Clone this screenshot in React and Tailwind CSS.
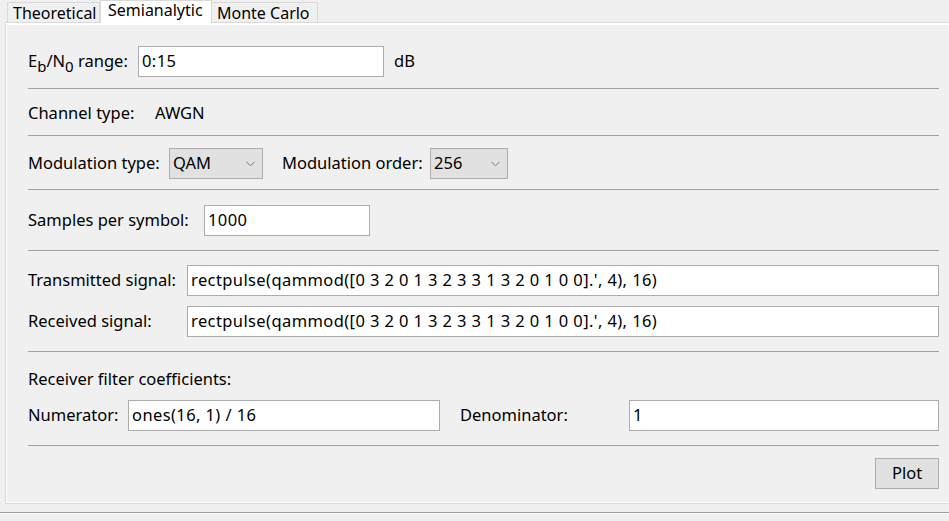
import React from "react";

const F = { fontFamily: '"Noto Sans", "Open Sans", sans-serif' };

function Input({ value, className }) {
  return (
    <div className={"h-[31px] bg-white border border-[#acacac] flex items-center pl-[3px] text-[16.5px] tracking-[0.4px] text-black whitespace-nowrap overflow-hidden " + className}>
      {value}
    </div>
  );
}

function Select({ value, className }) {
  return (
    <div className={"h-[31px] bg-[#e1e1e1] border border-[#adadad] flex items-center pl-[3px] pr-[7px] text-[16.5px] text-black justify-between " + className}>
      <span>{value}</span>
      <svg width="9" height="6" viewBox="0 0 9 6" className="mt-[1px]">
        <path d="M0.5 0.8 L4.5 4.8 L8.5 0.8" fill="none" stroke="#7a7a7a" strokeWidth="1" />
      </svg>
    </div>
  );
}

function Sep({ className }) {
  return <div className={"h-px bg-[#a0a0a0] mr-[10px] " + className} />;
}

export default function App() {
  return (
    <div style={F} className="w-[949px] h-[521px] bg-[#f0f0f0] overflow-hidden text-black text-[16.5px] flex flex-col">
      {/* tabs */}
      <div className="h-[22px] flex items-end pl-[7px] relative z-10 shrink-0 text-[16px]">
        <div className="h-[20px] w-[93px] border border-b-0 border-[#d9d9d9] bg-[#f0f0f0] pl-[5px] flex items-center leading-none">Theoretical</div>
        <div className="h-[23px] -mb-[1px] w-[112px] border border-b-0 border-[#d9d9d9] bg-white pl-[7px] flex items-start leading-[19px]">Semianalytic</div>
        <div className="h-[20px] w-[106px] border border-b-0 border-l-0 border-[#d9d9d9] bg-[#f0f0f0] pl-[5px] flex items-center leading-none">Monte Carlo</div>
      </div>
      {/* panel */}
      <div className="ml-[5px] h-[482px] shrink-0 border-t border-l border-b border-[#d9d9d9] bg-[#f0f0f0] flex flex-col">
        <div className="h-[2px] bg-white border-l border-white shrink-0" />
        <div className="flex-1 border-l border-white pl-[21px] flex flex-col">
          {/* row1 */}
          <div className="mt-[21px] h-[31px] flex items-center">
            <span className="w-[110px] flex items-baseline">
              E<sub className="text-[15px] relative top-[5px] align-baseline">b</sub>/N<sub className="text-[15px] relative top-[5px] align-baseline">0</sub>&nbsp;range:
            </span>
            <Input value="0:15" className="w-[246px]" />
            <span className="ml-[10px]">dB</span>
          </div>
          <Sep className="mt-[11px]" />
          {/* row2 */}
          <div className="h-[46px] flex items-center pt-[2px]">
            <span className="w-[127px]">Channel type:</span>
            <span>AWGN</span>
          </div>
          <Sep />
          {/* row3 */}
          <div className="mt-[12px] h-[31px] flex items-center">
            <span className="w-[141px]">Modulation type:</span>
            <Select value="QAM" className="w-[94px]" />
            <span className="ml-[19px] w-[148px]">Modulation order:</span>
            <Select value="256" className="w-[78px]" />
          </div>
          <Sep className="mt-[10px]" />
          {/* row4 */}
          <div className="mt-[15px] h-[31px] flex items-center">
            <span className="w-[176px]">Samples per symbol:</span>
            <Input value="1000" className="w-[166px]" />
          </div>
          <Sep className="mt-[14px]" />
          {/* row5 */}
          <div className="mt-[14px] h-[31px] flex items-center pr-[10px]">
            <span className="w-[159px] shrink-0">Transmitted signal:</span>
            <Input value="rectpulse(qammod([0 3 2 0 1 3 2 3 3 1 3 2 0 1 0 0].', 4), 16)" className="flex-1" />
          </div>
          <div className="mt-[10px] h-[31px] flex items-center pr-[10px]">
            <span className="w-[159px] shrink-0">Received signal:</span>
            <Input value="rectpulse(qammod([0 3 2 0 1 3 2 3 3 1 3 2 0 1 0 0].', 4), 16)" className="flex-1" />
          </div>
          <Sep className="mt-[14px]" />
          <div className="mt-[17px] h-[20px] flex items-center">Receiver filter coefficients:</div>
          <div className="mt-[11px] h-[31px] flex items-center pr-[10px]">
            <span className="w-[100px] shrink-0">Numerator:</span>
            <Input value="ones(16, 1) / 16" className="w-[312px]" />
            <span className="ml-[20px] w-[169px] shrink-0">Denominator:</span>
            <Input value="1" className="flex-1" />
          </div>
          <Sep className="mt-[14px]" />
          <div className="mt-[12px] h-[31px] flex justify-end pr-[10px]">
            <div className="w-[64px] h-[31px] bg-[#e1e1e1] border border-[#adadad] flex items-center justify-center">Plot</div>
          </div>
        </div>
        <div className="h-px bg-white shrink-0" />
      </div>
      <div className="mt-[8px] h-px bg-[#a0a0a0] shrink-0" />
      <div className="h-px bg-white shrink-0" />
    </div>
  );
}
